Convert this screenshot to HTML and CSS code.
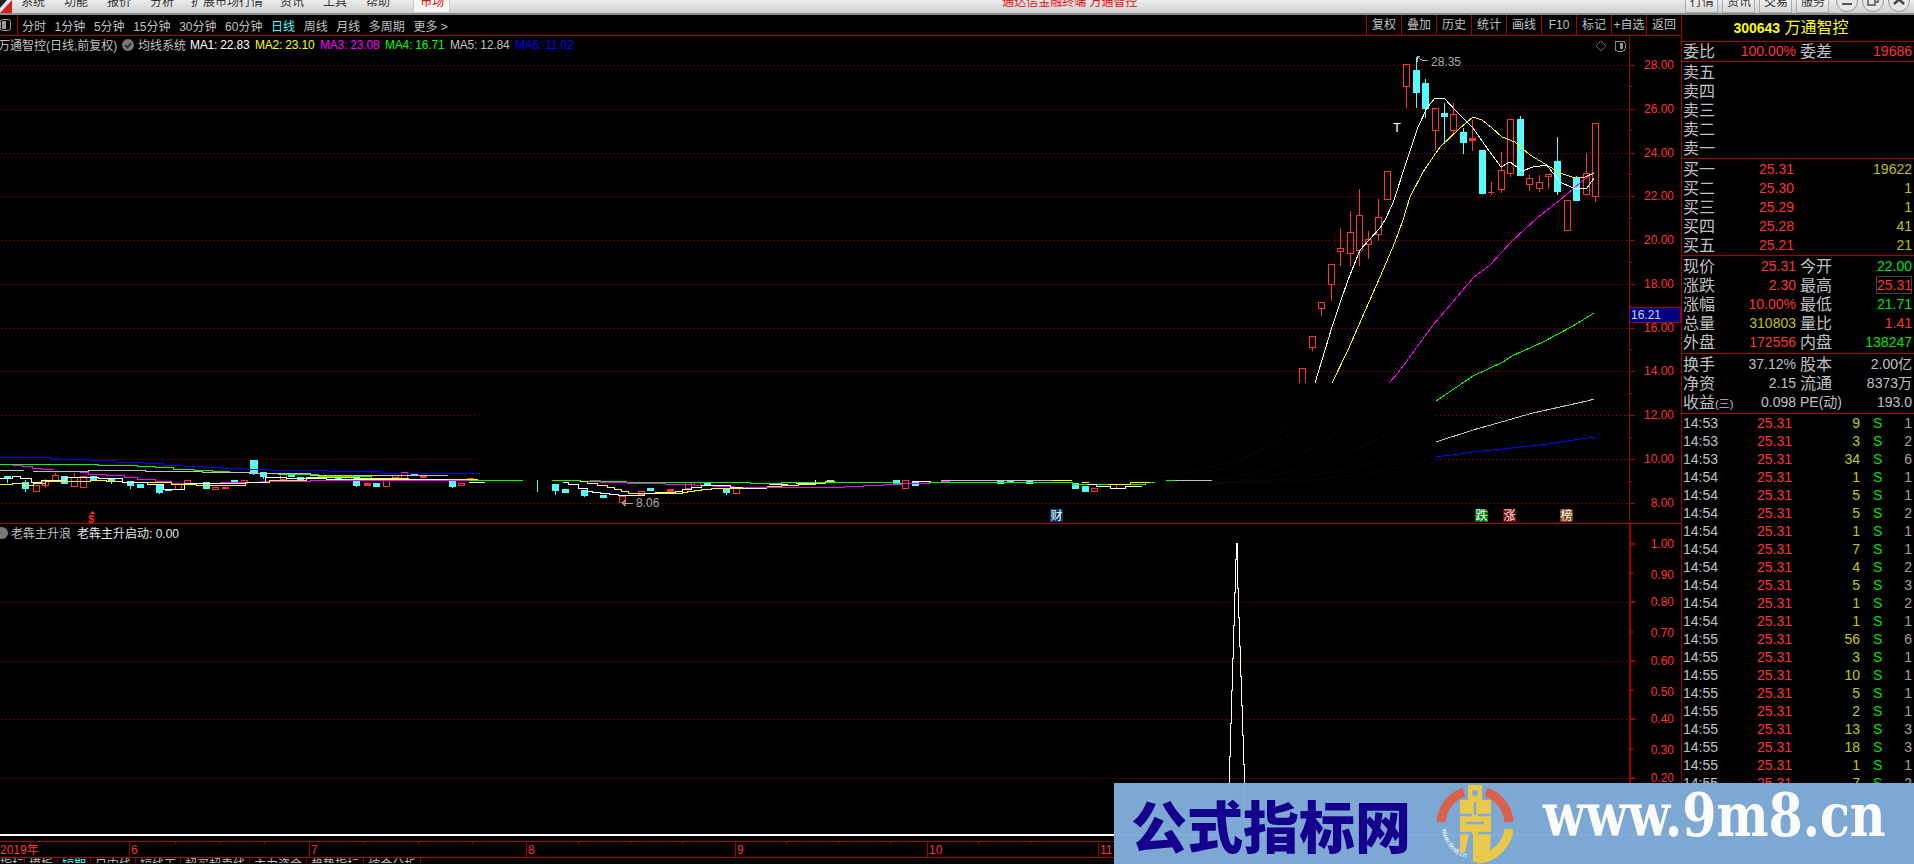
FILE: index.html
```html
<!DOCTYPE html>
<html lang="zh-CN">
<head>
  <meta charset="UTF-8" />
  <title>万通智控</title>
  <link rel="stylesheet" href="styles.css">
</head>
<body>
  <div class="menubar">
    <svg class="app-logo" width="12" height="13" viewBox="0 0 12 13"><rect width="12" height="13" fill="#eee"/><path d="M0 13L12 0V13z" fill="#d81e1e"/><path d="M0 0H7L0 8z" fill="#222"/></svg>
    <span>系统</span><span>功能</span><span>报价</span><span>分析</span><span class="menu-wide">扩展市场行情</span><span>资讯</span><span>工具</span><span>帮助</span>
    <span class="market-tab">市场</span>
    <span class="app-title">通达信金融终端 万通智控</span>
    <div class="menu-right">
      <span class="menu-btn">行情</span><span class="menu-btn">资讯</span><span class="menu-btn">交易</span><span class="menu-btn">服务</span>
      <span class="win-btn"><svg width="22" height="22" viewBox="0 0 22 22"><path d="M6 14H16" stroke="#555" stroke-width="2"/></svg></span>
      <span class="win-btn"><svg width="22" height="22" viewBox="0 0 22 22"><path d="M6 8H13V15H6zM9 8V5H16V12H13" fill="none" stroke="#555" stroke-width="1.5"/></svg></span>
      <span class="win-btn"><svg width="22" height="22" viewBox="0 0 22 22"><path d="M6 5L16 14M16 5L6 14" stroke="#444" stroke-width="2.5"/></svg></span>
    </div>
  </div>

  <div class="workspace">
    <div class="chart-col">
      <div class="toolbar">
        <svg class="layout-icon" width="11" height="14" viewBox="0 0 11 14"><rect x="0.5" y="1.5" width="10" height="11" rx="2" fill="none" stroke="#999"/><rect x="2" y="3" width="4" height="8" fill="#999"/></svg>
        <div class="periods">
          <span>分时</span><span>1分钟</span><span>5分钟</span><span>15分钟</span><span>30分钟</span><span>60分钟</span><span class="active">日线</span><span>周线</span><span>月线</span><span>多周期</span><span>更多 &gt;</span>
        </div>
        <div class="tools">
          <span>复权</span><span>叠加</span><span>历史</span><span>统计</span><span>画线</span><span>F10</span><span>标记</span><span>+自选</span><span>返回</span>
        </div>
      </div>

      <div class="pane main-pane">
        <svg class="chart" width="1681" height="487" viewBox="0 36 1681 487">
          <path class="dots" d="M2 65H1629M2 109H1629M2 153H1629M2 196H1629M2 240H1629M2 284H1629M2 328H1629M2 371H1629M2 415H476M1436 415H1629M2 459H476M1436 459H1629M2 503H1629"/>
          <path class="ghost" d="M1180 480C1240 470 1290 440 1315 383M1130 480C1240 470 1310 440 1332 383M1215 480C1300 470 1360 420 1389 383M1215 482C1330 475 1400 430 1436 401M1215 483C1340 480 1400 455 1436 442M1215 484C1340 483 1400 470 1436 457"/>

          <path class="up" d="M1299 383V368H1305V383M1309 336h6v11h-6zM1312 347V351M1318 302h6v6h-6zM1321 308V316M1328 264h6v20h-6zM1331 284V301M1337 248h6v3h-6zM1340 228V248M1340 251V266M1347 232h6v21h-6zM1350 211V232M1350 253V266M1356 215h6v35h-6zM1359 189V215M1359 250V266M1365 239h6v5h-6zM1368 231V239M1368 244V259M1375 217h6v17h-6zM1378 199V217M1378 234V241M1384 171h6v28h-6zM1403 64h6v22h-6zM1406 86V108M1432 108h6v22h-6zM1435 130V150M1450 114h6v16h-6zM1453 103V114M1453 130V134M1488 192h6M1491 182V195M1498 170h6v19h-6zM1501 152V170M1501 189V193M1507 119h6v54h-6zM1510 173V177M1526 178h6v6h-6zM1529 175V178M1529 184V191M1536 182h6v6h-6zM1539 175V182M1539 188V192M1545 174h6v2h-6zM1548 176V189M1564 200h6v30h-6zM1583 173h6v21h-6zM1586 153V173M1592 123h6v73h-6zM1595 196V202"/>
          <path class="up-solid" d="M1469 138h6v2h-6zM1472 120V138M1472 140V151"/>
          <path class="down" d="M1413 70h6v22h-6zM1416 57V108M1422 83h6v25h-6zM1425 79V118M1441 113h6v3h-6zM1444 103V144M1460 132h6v10h-6zM1463 128V154M1479 150h6v43h-6zM1517 119h6v56h-6zM1520 116V119M1554 161h6v30h-6zM1557 137V195M1573 178h6v22h-6zM1576 176V178"/>

          <!-- low price band, left part of the chart -->
          <path class="up" d="M33 485h6v6h-6zM42 481h6v4h-6zM45 479V488M52 475h6v6h-6zM55 473V475M71 477h6v9h-6zM74 473V477M80 476h6v11h-6zM175 483h6v6h-6zM184 480h6v4h-6zM212 487h6v2h-6zM222 487h6v1h-6zM241 480h6v3h-6zM280 474h6v5h-6zM345 477h6v2h-6zM383 478h6v8h-6zM392 475h6v2h-6zM401 472h6v6h-6zM420 476h6v1h-6zM458 483h6v2h-6zM467 478h6v1h-6zM619 496h6v6h-6zM638 491h6v3h-6zM685 482h6v6h-6zM694 482h6v3h-6zM733 488h6v5h-6zM902 480h6v8h-6zM1091 488h6v3h-6zM1110 484h6v4h-6z"/>
          <path class="up-solid" d="M364 483h6v2h-6zM667 489h6v2h-6z"/>
          <path class="down" d="M4 476h6v2h-6zM7 478V483M22 482h6v6h-6zM25 480V492M61 476h6v7h-6zM90 476h6v3h-6zM108 479h6v2h-6zM111 481V484M127 481h6v4h-6zM130 485V489M137 484h6v3h-6zM156 484h6v8h-6zM159 492V494M165 489h6v1h-6zM203 482h6v6h-6zM231 480h6v2h-6zM250 460h7v12h-7zM253 472V475M260 472h6v4h-6zM263 476V479M288 473h6v3h-6zM297 477h6v4h-6zM335 477h6v2h-6zM338 479V481M353 475h6v10h-6zM356 485V487M373 483h6v3h-6zM411 473h6v2h-6zM449 481h6v5h-6zM452 486V488M537 480V492M552 484h6v6h-6zM555 490V495M562 489h6v3h-6zM581 490h6v5h-6zM584 495V497M600 495h6v2h-6zM647 488h6v2h-6zM704 483h6v2h-6zM723 488h6v4h-6zM726 492V495M827 480h6v2h-6zM893 480h6v3h-6zM912 482h6v3h-6zM997 481h6v2h-6zM1007 480h6v2h-6zM1026 480h6v3h-6zM1072 483h6v5h-6zM1082 486h6v5h-6z"/>
          <path class="ma6" d="M0 457H51V459H90V460H116V462H143V463H163V465H184V466H202V467H220V468H245V469H269V470H327V471H380V473H480"/>
          <path class="ma4" d="M0 464H98V465H137V466H155V467H173V469H194V470H212V471H229V472H249V473H278V474H318V476H371V478H408V479H461V480H522M504 480H523M552 480H580V481H626V482H750V483H781V482H893V483H929V482H1072V484H1145V482H1155M1166 480H1175"/>
          <path class="ma5" d="M0 470H24M33 471H88V470H145V471H202V472H249V473H310V475H448M941 480H1072M1175 480H1212"/>
          <path class="ma3" d="M12 465H22V466H32V468H41V469H53V470M80 472H88V474H106V475H124V477H137V479H155V481H171V483H220V482H261V481H310V480H469M590 480H600V482H627V483H665V484H694V485H713V486H733V487H844V486H863V485H883V484H902V483H929M941 481H950"/>
          <path class="ma2" d="M0 484H12V483H22V485H33V483H45V481H90V480H106V481H122V482H171V484H196V485H245V482H269V480H306V477H355V478H408V479H478M580 481H587V483H597V485H607V487H614V489H621V491H628V493H682V492H687V491H694V490H701V489H711V488H742M767 486H781V485H798V484H815V483H825V481H835M1052 480H1072M1082 482H1089M1108 484H1130V482H1150"/>
          <path class="ma1" d="M0 478H12V476H20V478H31V482H41V480H65V477H98V478H122V482H147V484H163V489H184V483H245V482H265V477H286V478H326V479H448M469 482H485M563 482H568V484H578V488H587V491H592V492H600V493H609V494H618V495H644V493H655V492H675V491H682V489H691V487H701V485H730V487H742V488H767M769 484H788M796 483H815V480M912 481H931M1087 484H1096V486H1110V488H1125V486H1142"/>

          <!-- moving averages, upper right -->
          <polyline class="ma6" points="1436,457 1473,452 1540,445 1595,437"/>
          <polyline class="ma5" points="1436,442 1473,430 1533,413 1587,401 1594,399"/>
          <polyline class="ma4" points="1436,401 1473,376 1503,362 1512,356 1543,342 1573,326 1594,313"/>
          <polyline class="ma3" points="1389,383 1398,373 1417,347 1433,325 1452,303 1473,278 1490,265 1512,241 1537,218 1560,200 1580,183 1594,172"/>
          <polyline class="ma2" points="1332,383 1348,350 1358,327 1380,277 1395,242 1403,220 1410,197 1423,172 1440,147 1460,128 1473,117 1482,120 1492,128 1502,137 1515,142 1530,155 1550,167 1560,173 1575,178 1585,177 1594,173"/>
          <polyline class="ma1" points="1315,383 1332,327 1340,303 1348,280 1360,250 1380,228 1385,220 1393,203 1407,160 1418,127 1427,108 1435,98 1444,98 1457,112 1473,128 1487,148 1501,167 1510,162 1522,171 1533,167 1547,165 1553,173 1560,182 1573,188 1587,188 1594,178"/>

          <path class="note-line" d="M1417 62V56H1420M1417 57L1422 60L1428 61"/>
          <text class="note" x="1431" y="66">28.35</text>
          <text class="t-mark" x="1393" y="132">T</text>
          <path class="note-line" d="M622 503H633M622 503L626 500M622 503L626 506"/>
          <text class="note" x="636" y="507">8.06</text>

          <path class="dollar-arrow" d="M92 511L89 514H95z"/>
          <text class="dollar" x="88" y="523">$</text>
          <g class="event">
            <path d="M1050 509H1061L1063 511V522H1050z" fill="#003a6b"/><text x="1050.500" y="520">财</text>
            <path d="M1475 509H1486L1488 511V522H1475z" fill="#007a10"/><text x="1475.500" y="520">跌</text>
            <path d="M1503 509H1516V522H1503z" fill="#800000"/><text x="1503.500" y="520">涨</text>
            <path d="M1560 509H1571L1573 511V522H1560z" fill="#804010"/><text x="1560.500" y="520">榜</text>
          </g>

          <path class="diamond" d="M1601 41L1606 46L1601 51L1596 46z"/>
          <rect class="panel-toggle" x="1615" y="41" width="10" height="10" rx="2"/>
          <rect x="1620" y="43" width="3" height="6" fill="#999"/>

          <path class="axis" d="M1629 36V523M1629 65H1635M1629 86H1632M1629 109H1635M1629 130H1632M1629 153H1635M1629 174H1632M1629 196H1635M1629 218H1632M1629 240H1635M1629 262H1632M1629 284H1635M1629 306H1632M1629 328H1635M1629 349H1632M1629 371H1635M1629 393H1632M1629 415H1635M1629 437H1632M1629 459H1635M1629 481H1632M1629 503H1635"/>
          <g class="scale">
            <text x="1674" y="69">28.00</text><text x="1674" y="113">26.00</text><text x="1674" y="157">24.00</text><text x="1674" y="200">22.00</text><text x="1674" y="244">20.00</text><text x="1674" y="288">18.00</text><text x="1674" y="332">16.00</text><text x="1674" y="375">14.00</text><text x="1674" y="419">12.00</text><text x="1674" y="463">10.00</text><text x="1674" y="507">8.00</text>
          </g>
          <rect class="cursor-box" x="1629.500" y="307.500" width="51" height="15"/>
          <text class="cursor-text" x="1631" y="319">16.21</text>
        </svg>
        <div class="legend">
          <span class="stock-name">万通智控(日线,前复权)</span>
          <svg class="gear" width="12" height="12" viewBox="0 0 12 12"><circle cx="6" cy="6" r="6" fill="#777"/><path d="M3 6L5.500 8.500L9 4" fill="none" stroke="#222" stroke-width="1.500"/></svg>
          <span class="ma-system">均线系统</span>
          <span class="ma-val c-ma1">MA1: 22.83</span><span class="ma-val c-ma2">MA2: 23.10</span><span class="ma-val c-ma3">MA3: 23.08</span><span class="ma-val c-ma4">MA4: 16.71</span><span class="ma-val c-ma5">MA5: 12.84</span><span class="ma-val c-ma6">MA6: 11.02</span>
        </div>
      </div>

      <div class="pane sub-pane">
        <svg class="chart" width="1681" height="312" viewBox="0 524 1681 312">
          <path class="dots" d="M2 602H1629M2 661H1629M2 719H1629M2 778H1629"/>
          <path class="spike" d="M1229 836V756H1230V723H1231V690H1232V658H1233V625H1234V592H1235V559H1236V543H1237V558V588H1238V617H1239V646H1240V676H1241V705H1242V735H1243V764H1244V836"/>
          <path class="axis-thick" d="M1630 524V836M1630 544H1635M1630 573H1633M1630 602H1635M1630 632H1633M1630 661H1635M1630 690H1633M1630 719H1635M1630 749H1633M1630 778H1635M1630 807H1633"/>
          <g class="scale">
            <text x="1674" y="548">1.00</text><text x="1674" y="579">0.90</text><text x="1674" y="606">0.80</text><text x="1674" y="637">0.70</text><text x="1674" y="665">0.60</text><text x="1674" y="696">0.50</text><text x="1674" y="723">0.40</text><text x="1674" y="754">0.30</text><text x="1674" y="782">0.20</text>
          </g>
        </svg>
        <div class="sub-legend">
          <svg class="gear-sub" width="8" height="12" viewBox="4 0 8 12"><circle cx="6" cy="6" r="6" fill="#777"/></svg>
          <span class="sub-name">老犇主升浪</span>
          <span class="sub-val">老犇主升启动: 0.00</span>
        </div>
      </div>

      <div class="date-gap"></div>
      <svg class="date-axis" width="1681" height="17" viewBox="0 843 1681 17">
        <path class="axis" d="M0 843H1681M0 859H1681M129 843V859M309 843V859M526 843V859M735 843V859M927 843V859M1098 843V859M175 843V846M219 843V846M264 843V846M363 843V846M418 843V846M472 843V846M578 843V846M630 843V846M682 843V846M786 843V846M838 843V846M890 843V846M978 843V846M1030 843V846"/>
        <g class="dates">
          <text x="0" y="856">2019年</text><text x="131" y="856">6</text><text x="311" y="856">7</text><text x="528" y="856">8</text><text x="737" y="856">9</text><text x="929" y="856">10</text><text x="1100" y="856">11</text>
        </g>
      </svg>
      <div class="tabs">
        <span class="first-tab">指标</span><span>模板</span><span class="active">短期</span><span>日内线</span><span>短线王</span><span>超买超卖线</span><span>主力资金</span><span>趋势指标</span><span>综合分析</span>
      </div>
    </div>

    <div class="quote">
      <div class="q-title"><b>300643</b> 万通智控</div>

      <div class="q-row q-ratio"><span>委比</span><em class="red">100.00%</em><span class="l2">委差</span><em class="red">19686</em></div>

      <div class="q-block q-asks">
        <div class="q-row"><span>卖五</span></div>
        <div class="q-row"><span>卖四</span></div>
        <div class="q-row"><span>卖三</span></div>
        <div class="q-row"><span>卖二</span></div>
        <div class="q-row"><span>卖一</span></div>
      </div>

      <div class="q-block q-bids">
        <div class="q-row"><span>买一</span><em class="red">25.31</em><i></i><em class="olive">19622</em></div>
        <div class="q-row"><span>买二</span><em class="red">25.30</em><i></i><em class="olive">1</em></div>
        <div class="q-row"><span>买三</span><em class="red">25.29</em><i></i><em class="olive">1</em></div>
        <div class="q-row"><span>买四</span><em class="red">25.28</em><i></i><em class="olive">41</em></div>
        <div class="q-row"><span>买五</span><em class="red">25.21</em><i></i><em class="olive">21</em></div>
      </div>

      <div class="q-block q-summary">
        <div class="q-row"><span>现价</span><em class="red">25.31</em><span class="l2">今开</span><em class="green">22.00</em></div>
        <div class="q-row"><span>涨跌</span><em class="red">2.30</em><span class="l2">最高</span><em class="red high-box">25.31</em></div>
        <div class="q-row"><span>涨幅</span><em class="red">10.00%</em><span class="l2">最低</span><em class="green">21.71</em></div>
        <div class="q-row"><span>总量</span><em class="olive">310803</em><span class="l2">量比</span><em class="red">1.41</em></div>
        <div class="q-row"><span>外盘</span><em class="red">172556</em><span class="l2">内盘</span><em class="green">138247</em></div>
      </div>

      <div class="q-block q-finance">
        <div class="q-row"><span>换手</span><em>37.12%</em><span class="l2">股本</span><em>2.00亿</em></div>
        <div class="q-row"><span>净资</span><em>2.15</em><span class="l2">流通</span><em>8373万</em></div>
        <div class="q-row"><span>收益<small class="q-small">(三)</small></span><em>0.098</em><span class="l2 q-pe">PE(动)</span><em>193.0</em></div>
      </div>

      <div class="ticks">
        <div class="tick"><span>14:53</span><em>25.31</em><b>9</b><u>S</u><s>1</s></div>
        <div class="tick"><span>14:53</span><em>25.31</em><b>3</b><u>S</u><s>2</s></div>
        <div class="tick"><span>14:53</span><em>25.31</em><b>34</b><u>S</u><s>6</s></div>
        <div class="tick"><span>14:54</span><em>25.31</em><b>1</b><u>S</u><s>1</s></div>
        <div class="tick"><span>14:54</span><em>25.31</em><b>5</b><u>S</u><s>1</s></div>
        <div class="tick"><span>14:54</span><em>25.31</em><b>5</b><u>S</u><s>2</s></div>
        <div class="tick"><span>14:54</span><em>25.31</em><b>1</b><u>S</u><s>1</s></div>
        <div class="tick"><span>14:54</span><em>25.31</em><b>7</b><u>S</u><s>1</s></div>
        <div class="tick"><span>14:54</span><em>25.31</em><b>4</b><u>S</u><s>2</s></div>
        <div class="tick"><span>14:54</span><em>25.31</em><b>5</b><u>S</u><s>3</s></div>
        <div class="tick"><span>14:54</span><em>25.31</em><b>1</b><u>S</u><s>2</s></div>
        <div class="tick"><span>14:54</span><em>25.31</em><b>1</b><u>S</u><s>1</s></div>
        <div class="tick"><span>14:55</span><em>25.31</em><b>56</b><u>S</u><s>6</s></div>
        <div class="tick"><span>14:55</span><em>25.31</em><b>3</b><u>S</u><s>1</s></div>
        <div class="tick"><span>14:55</span><em>25.31</em><b>10</b><u>S</u><s>1</s></div>
        <div class="tick"><span>14:55</span><em>25.31</em><b>5</b><u>S</u><s>1</s></div>
        <div class="tick"><span>14:55</span><em>25.31</em><b>2</b><u>S</u><s>1</s></div>
        <div class="tick"><span>14:55</span><em>25.31</em><b>13</b><u>S</u><s>3</s></div>
        <div class="tick"><span>14:55</span><em>25.31</em><b>18</b><u>S</u><s>3</s></div>
        <div class="tick"><span>14:55</span><em>25.31</em><b>1</b><u>S</u><s>1</s></div>
        <div class="tick"><span>14:55</span><em>25.31</em><b>7</b><u>S</u><s>2</s></div>
      </div>
    </div>
  </div>

  <!-- site watermark across the bottom right -->
  <div class="watermark">
    <span class="wm-title">公式指标网</span>
    <svg class="wm-logo" width="78" height="80" viewBox="-39 -40 78 80">
      <path d="M-34 -2A34 34 0 0 1 -11 -32M11 -32A34 34 0 0 1 34 -2" fill="none" stroke="#d9604c" stroke-width="9"/>
      <path d="M34 5A34 34 0 0 1 2 35" fill="none" stroke="#e8c94a" stroke-width="9"/>
      <path id="wmArc" d="M-33 5A33 33 0 0 0 -4 35" fill="none"/>
      <text class="wm-arc"><textPath href="#wmArc">www.9m8.cn</textPath></text>
      <path d="M-7 -39H7V-24H16V8L15 30H6L2 38H-2V10H-6L-10 28H-15V-24H-7z" fill="#e8c94a"/>
      <circle cx="0" cy="-31" r="3" fill="#7fabd8"/>
      <path d="M-15 -9H-3M3 -9H16M-9 -1H9M-15 9H-3M3 9H16M0 -22V-9" stroke="#7fabd8" stroke-width="2.500" fill="none"/>
    </svg>
    <span class="wm-url">www.9m8.cn</span>
  </div>
</body>
</html>
```

FILE: styles.css
```css
* {
  box-sizing: border-box;
}
html, body {
  margin: 0;
  padding: 0;
}
body {
  position: relative;
  width: 1914px;
  height: 864px;
  overflow: hidden;
  background-color: #000;
  color: #c0c0c0;
  font-family: "Liberation Sans", "Noto Sans CJK SC", sans-serif;
  font-size: 12px;
}
em, i, u, s, b {
  font-style: normal;
  text-decoration: none;
}

/* top menu, cut off by the top of the window */
.menubar {
  display: flex;
  height: 15px;
  overflow: hidden;
  padding-right: 4px;
  background: linear-gradient(#ececec, #cfcfcf);
  border-bottom: 2px solid #8c8c8c;
  color: #333;
  line-height: 5px;
  gap: 19px;
}
.app-logo {
  margin-right: -10px;
  flex: none;
}
.menu-wide {
  margin: 0 -2px;
}
.market-tab {
  width: 37px;
  height: 13px;
  margin-left: 4px;
  padding-left: 6px;
  background-color: #f6f6f6;
  border: 1px solid #ccc;
  border-top: 0;
  color: #e00000;
}
.app-title {
  margin-left: 533px;
  color: #f00000;
}
.menu-right {
  display: flex;
  margin-left: auto;
  gap: 4px;
}
.menu-btn {
  width: 33px;
  height: 13px;
  padding-left: 4px;
  background: linear-gradient(#f2f2f2, #d8d8d8);
  border: 1px solid #aaa;
  border-top: 0;
}
.win-btn {
  width: 22px;
  height: 22px;
  margin-top: -10px;
  background-color: #e6e6e6;
  border: 1px solid #999;
  border-radius: 50%;
  line-height: 0;
}
.win-btn svg {
  margin: -1px;
}
.menu-btn + .win-btn {
  margin-left: 3px;
}

.workspace {
  display: flex;
}
.chart-col {
  width: 1681px;
  flex: none;
}

.toolbar {
  display: flex;
  align-items: center;
  height: 21px;
  border-bottom: 1px solid #a00000;
}
.layout-icon {
  flex: none;
}
.periods {
  display: flex;
  margin-left: 6px;
  padding-left: 4px;
  height: 20px;
  align-items: center;
  border-left: 1px solid #a00000;
  gap: 8.6px;
}
.periods .active {
  color: #54fcfc;
}
.tools {
  display: flex;
  height: 20px;
  margin-left: auto;
}
.tools span {
  width: 35px;
  border-left: 1px solid #a00000;
  line-height: 20px;
  text-align: center;
  white-space: nowrap;
}

.pane {
  position: relative;
  border-bottom: 1px solid #a00000;
}
.main-pane {
  height: 488px;
}
.sub-pane {
  height: 312px;
  border-bottom: 2px solid #fff;
}
.chart {
  display: block;
  shape-rendering: crispEdges;
}
.dots {
  fill: none;
  stroke: #c00000;
  stroke-dasharray: 1 3;
}
.ghost {
  fill: none;
  stroke: #070707;
}
.up {
  fill: none;
  stroke: #ff3232;
}
.up-solid {
  fill: #ff3232;
  stroke: #ff3232;
}
.down {
  fill: #54fcfc;
  stroke: #54fcfc;
}
.ma1, .ma2, .ma3, .ma4, .ma5, .ma6 {
  fill: none;
  stroke-width: 1;
}
.ma1 { stroke: #fff; }
.ma2 { stroke: #ff0; }
.ma3 { stroke: #f0f; }
.ma4 { stroke: #0f0; }
.ma5 { stroke: #c0c0c0; }
.ma6 { stroke: #00f; }
.c-ma1 { color: #fff; }
.c-ma2 { color: #ff0; }
.c-ma3 { color: #f0f; }
.c-ma4 { color: #0f0; }
.c-ma5 { color: #c0c0c0; }
.c-ma6 { color: #00f; }

.note-line {
  fill: none;
  stroke: #aaa;
}
.note {
  fill: #aaa;
  font-size: 12px;
}
.t-mark {
  fill: #fff;
  font-size: 13px;
}
.dollar-arrow {
  fill: #ff2020;
}
.dollar {
  fill: #ff2020;
  font-size: 11px;
  font-weight: bold;
}
.event text {
  fill: #fff;
  font-size: 12px;
}
.diamond {
  fill: none;
  stroke: #666;
}
.panel-toggle {
  fill: none;
  stroke: #888;
}
.axis {
  fill: none;
  stroke: #a00000;
}
.axis-thick {
  fill: none;
  stroke: #a00000;
  stroke-width: 2;
}
.scale text {
  fill: #ff3232;
  font-size: 12px;
  text-anchor: end;
}
.cursor-box {
  fill: #000080;
  stroke: #a00000;
}
.cursor-text {
  fill: #c8d8ff;
  font-size: 12px;
}
.spike {
  fill: none;
  stroke: #fff;
}
.dates text {
  fill: #ff3232;
  font-size: 12px;
}

/* indicator legends sit on top of the charts */
.legend {
  position: absolute;
  top: 0;
  left: -2px;
  display: flex;
  align-items: center;
  height: 17px;
  white-space: nowrap;
}
.stock-name {
  width: 124px;
}
.gear {
  flex: none;
}
.ma-system {
  width: 52px;
  margin-left: 4px;
}
.ma-val {
  width: 65px;
  letter-spacing: -0.2px;
}
.sub-legend {
  position: absolute;
  top: 0;
  left: 0;
  display: flex;
  align-items: center;
  height: 17px;
  white-space: nowrap;
}
.gear-sub {
  flex: none;
}
.sub-name {
  width: 66px;
  margin-left: 3px;
}
.sub-val {
  color: #e8e8e8;
}

.date-gap {
  height: 5px;
}
.date-axis {
  display: block;
  shape-rendering: crispEdges;
}
.tabs {
  display: flex;
  height: 5px;
  overflow: hidden;
  line-height: 14px;
}
.tabs span {
  padding: 0 4px;
  border-right: 1px solid #a00000;
  white-space: nowrap;
}
.tabs .first-tab {
  padding: 0;
}
.tabs .active {
  color: #54fcfc;
}

/* quote panel on the right */
.quote {
  width: 233px;
  flex: none;
  border-left: 1px solid #a00000;
}
.q-title {
  height: 27px;
  padding-right: 14px;
  border-bottom: 1px solid #a00000;
  color: #ff0;
  font-size: 16px;
  line-height: 26px;
  text-align: center;
}
.q-title b {
  font-size: 14px;
}
.q-row {
  display: grid;
  grid-template-columns: 32px 81px 36px 80px;
  height: 19px;
  padding-left: 1px;
  font-size: 16px;
  line-height: 19px;
  white-space: nowrap;
}
.q-row em {
  font-size: 14px;
  text-align: right;
}
.q-row .l2 {
  padding-left: 4px;
}
.q-row .q-pe {
  font-size: 14px;
}
.q-small {
  font-size: 11px;
}
.q-ratio {
  height: 20px;
  border-bottom: 1px solid #a00000;
}
.q-block {
  height: 97px;
  padding-top: 1px;
  border-bottom: 1px solid #a00000;
}
.q-summary {
  height: 98px;
}
.q-finance {
  height: 60px;
}
.q-bids em:first-of-type {
  padding-right: 2px;
}
.high-box {
  border: 1px solid #444;
  line-height: 16px;
  height: 18px;
  margin-left: 44px;
  padding-right: 1px;
}
.red { color: #ff3232; }
.olive { color: #c0c000; }
.green { color: #00e600; }

.ticks {
  padding-left: 1px;
}
.tick {
  display: grid;
  grid-template-columns: 40px 69px 68px 20px 32px;
  height: 18px;
  font-size: 14px;
  line-height: 18px;
}
.tick em {
  color: #ff3232;
  text-align: right;
}
.tick b {
  color: #c8c800;
  font-weight: normal;
  text-align: right;
}
.tick u {
  padding-left: 13px;
  color: #00e000;
}
.tick s {
  color: #a0a0a0;
  text-align: right;
}

.watermark {
  position: absolute;
  left: 1114px;
  top: 783px;
  display: flex;
  align-items: center;
  width: 800px;
  height: 81px;
  padding-left: 17px;
  background-color: rgba(127, 171, 216, 0.98);
}
.wm-title {
  width: 275px;
  color: #14008c;
  font-family: "Noto Sans CJK SC", sans-serif;
  font-size: 56px;
  font-weight: 900;
  line-height: 60px;
  white-space: nowrap;
}
.wm-logo {
  flex: none;
  margin-left: 30px;
}
.wm-arc {
  fill: #fff;
  font-size: 7px;
}
.wm-url {
  width: 356px;
  margin-left: 29px;
  margin-top: -18px;
  color: #fbfbfb;
  font-family: "DejaVu Serif", serif;
  font-size: 60px;
  font-weight: bold;
  line-height: 60px;
  white-space: nowrap;
  transform: scaleX(0.82);
  transform-origin: left center;
}
```
